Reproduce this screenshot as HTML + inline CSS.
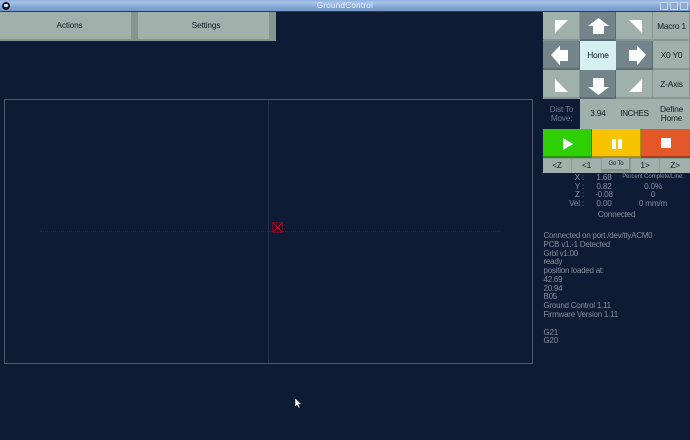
<!DOCTYPE html>
<html><head><meta charset="utf-8"><style>
html,body{margin:0;padding:0;width:690px;height:440px;overflow:hidden;background:#0e1b35;font-family:"Liberation Sans",sans-serif}
div{position:absolute;box-sizing:border-box}
.b{background:#a0b0ab;color:#151c20;text-align:center;font-size:8.4px;letter-spacing:-.2px;box-shadow:inset -1px -2px 0 #849490;display:flex;align-items:center;justify-content:center;line-height:9.5px}
.d{background:#73858b;box-shadow:inset -1px -2px 0 #5d6d73}
.t{color:#858d98;font-size:8.2px;letter-spacing:-.2px;line-height:9px;white-space:nowrap;text-align:center}
.r{text-align:right}
svg{position:absolute;left:0;top:0}
</style></head><body>
<div style="left:0;top:0;width:690px;height:12px;background:linear-gradient(#8fb0dc,#a8c4e8 20%,#7fa5d6 60%,#6f97cb)"></div>
<div style="left:0;top:11px;width:690px;height:1px;background:#2c3d5a"></div>
<div style="left:2px;top:2px;width:8px;height:8px;border-radius:50%;background:#1a1f28"></div>
<div style="left:4px;top:4px;width:4px;height:3px;background:#dde;border-radius:1px"></div>
<div style="left:0;top:1px;width:690px;text-align:center;color:#eef3fa;font-size:8px;line-height:10px;letter-spacing:.3px">GroundControl</div>
<div style="left:660px;top:2px;width:8px;height:8px;background:#8fa9cf;border:1px solid #c8d6ea"></div>
<div style="left:670px;top:2px;width:8px;height:8px;background:#8fa9cf;border:1px solid #c8d6ea"></div>
<div style="left:680px;top:2px;width:8px;height:8px;background:#8fa9cf;border:1px solid #c8d6ea"></div>

<div style="left:0;top:12px;width:276px;height:29px;background:#84948f"></div>
<div class="b" style="left:0;top:12px;width:131px;height:27px;box-shadow:none;padding-left:8px">Actions</div>
<div class="b" style="left:138px;top:12px;width:131px;height:27px;box-shadow:none;padding-left:5px">Settings</div>

<div style="left:4px;top:99px;width:529px;height:265px;border:1px solid #4d5a6d"></div>
<div style="left:268px;top:100px;width:1px;height:263px;background:#232f45"></div>
<div style="left:40px;top:231px;width:460px;height:0;border-top:1px dotted #1f2c44"></div>
<svg width="690" height="440" style="left:0;top:0">
<rect x="272.5" y="222.5" width="10" height="10" fill="none" stroke="#8f0a24" stroke-dasharray="2 1"/>
<path d="M273 223L282 232M282 223L273 232" stroke="#c00020" stroke-width="1.2"/>
<path d="M295 398v9l2-2 1.5 3 1.5-.7-1.5-3h3z" fill="#fff" stroke="#111" stroke-width=".5"/>
</svg>

<div class="b" style="left:543px;top:12px;width:37px;height:29px"></div>
<div class="b d" style="left:580px;top:12px;width:36px;height:29px"></div>
<div class="b" style="left:616px;top:12px;width:37px;height:29px"></div>
<div class="b" style="left:653px;top:12px;width:37px;height:29px">Macro 1</div>
<div class="b d" style="left:543px;top:41px;width:37px;height:29px"></div>
<div class="b" style="left:580px;top:41px;width:36px;height:29px;background:#d6eff0;box-shadow:none">Home</div>
<div class="b d" style="left:616px;top:41px;width:37px;height:29px"></div>
<div class="b" style="left:653px;top:41px;width:37px;height:29px">X0 Y0</div>
<div class="b" style="left:543px;top:70px;width:37px;height:29px"></div>
<div class="b d" style="left:580px;top:70px;width:36px;height:29px"></div>
<div class="b" style="left:616px;top:70px;width:37px;height:29px"></div>
<div class="b" style="left:653px;top:70px;width:37px;height:29px">Z-Axis</div>
<div class="t" style="left:543px;top:105px;width:37px;line-height:9px;font-size:8.2px;color:#6f7a88">Dist To<br>Move:</div>
<div class="b" style="left:580px;top:99px;width:36px;height:30px;box-shadow:none">3.94</div>
<div class="b" style="left:616px;top:99px;width:37px;height:30px;box-shadow:none;font-size:8px;letter-spacing:-.3px">INCHES</div>
<div class="b" style="left:653px;top:99px;width:37px;height:30px;box-shadow:none">Define<br>Home</div>

<div style="left:543px;top:129px;width:49px;height:29px;background:#2fcf05;box-shadow:inset -1px -2px 0 #22960a"></div>
<div style="left:592px;top:129px;width:49px;height:29px;background:#f6c300;box-shadow:inset -1px -2px 0 #b08c05"></div>
<div style="left:641px;top:129px;width:49px;height:29px;background:#e4572a;box-shadow:inset 0 -2px 0 #a63e1e"></div>

<div style="left:543px;top:158px;width:147px;height:15px;background:#8a9a96"></div>
<div class="b" style="left:543px;top:159px;width:28px;height:14px;box-shadow:none">&lt;Z</div>
<div class="b" style="left:572px;top:159px;width:29px;height:14px;box-shadow:none">&lt;1</div>
<div class="b" style="left:602px;top:158px;width:28px;height:13px;font-size:6px">Go To</div>
<div class="b" style="left:631px;top:159px;width:28px;height:14px;box-shadow:none">1&gt;</div>
<div class="b" style="left:660px;top:159px;width:30px;height:14px;box-shadow:none">Z&gt;</div>

<svg width="690" height="440">
<g fill="#fff">
<path d="M555 20h13l-13 13z"/>
<path d="M598.5 18l10.5 8h-5v8h-11v-8h-5z"/>
<path d="M629 20h13v13z"/>
<path d="M551 55l9-9.500v4.500h8v11h-8v4.500z"/>
<path d="M646 55l-9-9.500v4.500h-8v11h8v4.500z"/>
<path d="M555 79l13 13h-13z"/>
<path d="M598.500 95l10.500-8h-5v-9h-11v9h-5z"/>
<path d="M642 79v13h-13z"/>
<path d="M563 138v12l10-6z"/>
<rect x="612" y="139" width="4" height="10"/>
<rect x="618" y="139" width="4" height="10"/>
<rect x="661" y="138" width="10" height="10"/>
</g></svg>

<div class="t r" style="left:560px;top:173px;width:24px">X :</div>
<div class="t r" style="left:560px;top:182px;width:24px">Y :</div>
<div class="t r" style="left:560px;top:190px;width:24px">Z :</div>
<div class="t r" style="left:560px;top:199px;width:24px">Vel :</div>
<div class="t" style="left:590px;top:173px;width:28px">1.68</div>
<div class="t" style="left:590px;top:182px;width:28px">0.82</div>
<div class="t" style="left:590px;top:190px;width:28px">-0.08</div>
<div class="t" style="left:590px;top:199px;width:28px">0.00</div>
<div class="t" style="left:620px;top:173px;width:66px;font-size:6px;letter-spacing:-.05px;line-height:8px">Percent Complete/Line:</div>
<div class="t" style="left:620px;top:182px;width:66px">0.0%</div>
<div class="t" style="left:620px;top:190px;width:66px">0</div>
<div class="t" style="left:620px;top:199px;width:66px">0 mm/m</div>
<div class="t" style="left:543px;top:210px;width:147px;font-size:8.2px;letter-spacing:-.25px">Connected</div>

<div class="t" style="left:543.5px;top:232px;text-align:left;font-size:8px;letter-spacing:-.24px;line-height:8.78px;color:#858d98">Connected on port /dev/ttyACM0<br>PCB v1.-1 Detected<br>Grbl v1.00<br>ready<br>position loaded at:<br>42.69<br>20.94<br>B05<br>Ground Control 1.11<br>Firmware Version 1.11<br><br>G21<br>G20</div>
</body></html>
